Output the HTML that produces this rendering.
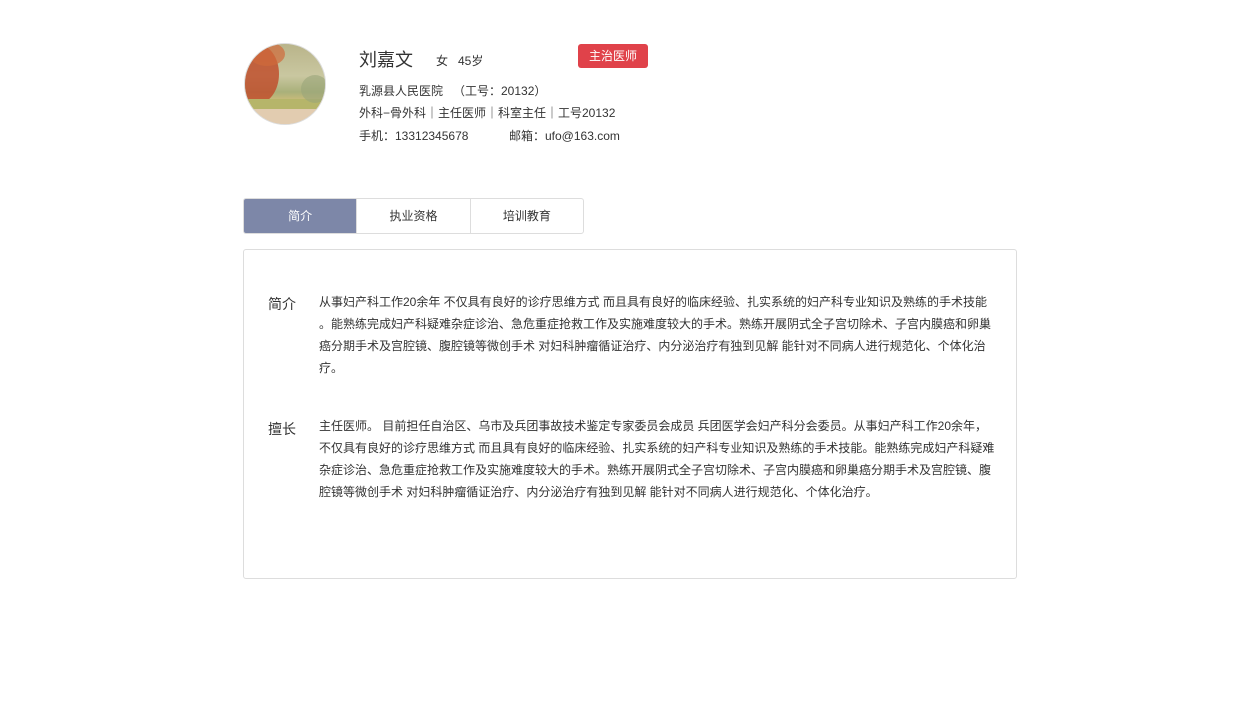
<!DOCTYPE html>
<html><head><meta charset="utf-8"><style>
*{margin:0;padding:0;box-sizing:border-box}
body{width:1260px;height:714px;background:#fff;font-family:"Liberation Sans","Noto Sans CJK SC",sans-serif;color:#333;position:relative;overflow:hidden}
.a{position:absolute;white-space:nowrap}
.av{left:244px;top:43px;width:82px;height:82px;border-radius:50%;border:1px solid #ddd;overflow:hidden;background:linear-gradient(180deg,#b9b48a 0%,#c9c7a0 40%,#a9b07a 60%,#d9c07a 75%,#e0c9a8 100%)}
.tabs{left:243px;top:198px;width:341px;height:36px;border:1px solid #ddd;border-radius:3px;display:flex;font-size:12px;overflow:hidden}
.tabs div{flex:1;text-align:center;line-height:34px;border-left:1px solid #ddd;color:#333}
.tabs div:first-child{background:#7d87a8;color:#fff;border-left:none}
.box{left:243px;top:249px;width:774px;height:330px;border:1px solid #ddd;border-radius:3px}
.p{position:absolute;left:319px;width:680px;font-size:12px;line-height:22px;color:#333;white-space:normal}
.l{position:absolute;left:268px;font-size:14px;color:#333}
</style></head><body>
<div class="a av">
<svg width="82" height="82"><ellipse cx="12" cy="30" rx="22" ry="30" fill="#c0502e" opacity=".85"/><ellipse cx="22" cy="10" rx="18" ry="12" fill="#d06a3a" opacity=".7"/><rect x="0" y="55" width="82" height="10" fill="#b6b56a"/><rect x="0" y="65" width="82" height="17" fill="#e2ccb0"/><ellipse cx="70" cy="45" rx="14" ry="14" fill="#9aa57a" opacity=".6"/></svg>
</div>
<div class="a" style="left:359px;top:46px;font-size:18px;color:#333">刘嘉文</div>
<div class="a" style="left:436px;top:52px;font-size:12px">女&nbsp;&nbsp;&nbsp;45岁</div>
<div class="a" style="left:578px;top:44px;width:70px;height:24px;background:#e0424a;color:#fff;border-radius:3px;font-size:12px;text-align:center;line-height:24px">主治医师</div>
<div class="a" style="left:359px;top:82px;font-size:12px">乳源县人民医院&nbsp;&nbsp;&nbsp;（工号：20132）</div>
<div class="a" style="left:359px;top:104px;font-size:12px">外科−骨外科｜主任医师｜科室主任｜工号20132</div>
<div class="a" style="left:359px;top:127px;font-size:12px">手机：13312345678</div>
<div class="a" style="left:509px;top:127px;font-size:12px">邮箱：ufo@163.com</div>
<div class="a tabs"><div>简介</div><div>执业资格</div><div>培训教育</div></div>
<div class="a box"></div>
<div class="l" style="top:294px">简介</div>
<div class="p" style="top:291px;white-space:nowrap">从事妇产科工作20余年 不仅具有良好的诊疗思维方式 而且具有良好的临床经验、扎实系统的妇产科专业知识及熟练的手术技能<br>。能熟练完成妇产科疑难杂症诊治、急危重症抢救工作及实施难度较大的手术。熟练开展阴式全子宫切除术、子宫内膜癌和卵巢<br>癌分期手术及宫腔镜、腹腔镜等微创手术 对妇科肿瘤循证治疗、内分泌治疗有独到见解 能针对不同病人进行规范化、个体化治<br>疗。</div>
<div class="l" style="top:419px">擅长</div>
<div class="p" style="top:415px">主任医师。 目前担任自治区、乌市及兵团事故技术鉴定专家委员会成员 兵团医学会妇产科分会委员。从事妇产科工作20余年，不仅具有良好的诊疗思维方式 而且具有良好的临床经验、扎实系统的妇产科专业知识及熟练的手术技能。能熟练完成妇产科疑难杂症诊治、急危重症抢救工作及实施难度较大的手术。熟练开展阴式全子宫切除术、子宫内膜癌和卵巢癌分期手术及宫腔镜、腹腔镜等微创手术 对妇科肿瘤循证治疗、内分泌治疗有独到见解 能针对不同病人进行规范化、个体化治疗。</div>
</body></html>
